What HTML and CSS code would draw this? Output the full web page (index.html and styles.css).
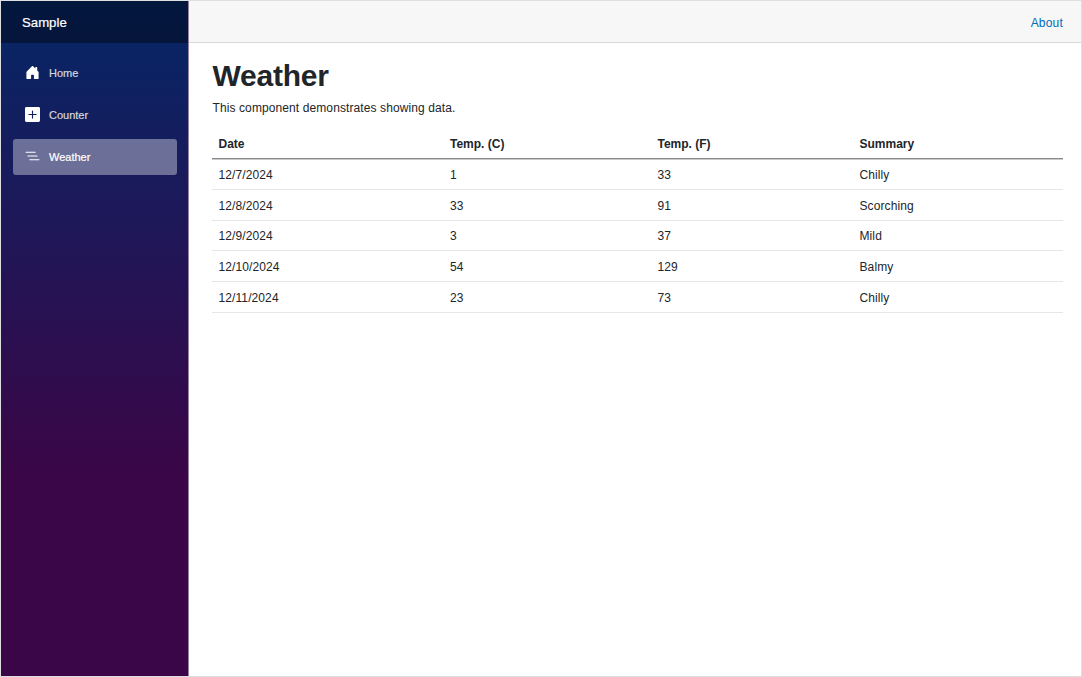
FILE: index.html
```html
<!DOCTYPE html>
<html lang="en">
<head>
<meta charset="utf-8">
<title>Weather</title>
<link rel="stylesheet" href="styles.css">
</head>
<body>
<div class="page">
  <aside class="sidebar">
    <div class="brand"><span class="brand-text">Sample</span></div>
    <nav class="nav">
      <a class="nav-link">
        <svg class="icon" viewBox="0 0 16 16"><path d="M6.5 14.5v-3.505c0-.245.25-.495.5-.495h2c.25 0 .5.25.5.5v3.5a.5.5 0 0 0 .5.5h4a.5.5 0 0 0 .5-.5v-7a.5.5 0 0 0-.146-.354L13 5.793V2.5a.5.5 0 0 0-.5-.5h-1a.5.5 0 0 0-.5.5v1.293L8.354 1.146a.5.5 0 0 0-.708 0l-6 6A.5.5 0 0 0 1.5 7.5v7a.5.5 0 0 0 .5.5h4a.5.5 0 0 0 .5-.5Z"/></svg>
        <span class="nav-text">Home</span>
      </a>
      <a class="nav-link">
        <svg class="icon" viewBox="0 0 16 16"><path d="M1.500 0A1.500 1.500 0 0 0 0 1.500v13A1.500 1.500 0 0 0 1.500 16h13a1.500 1.500 0 0 0 1.500-1.500v-13A1.500 1.500 0 0 0 14.500 0zM8.600 4.200v3.200h3.200a.6.6 0 0 1 0 1.200H8.600v3.200a.6.6 0 0 1-1.200 0V8.600H4.200a.6.6 0 0 1 0-1.200h3.200V4.200a.6.6 0 0 1 1.200 0z"/></svg>
        <span class="nav-text">Counter</span>
      </a>
      <a class="nav-link active">
        <svg class="icon" viewBox="0 0 16 16"><path fill-rule="evenodd" d="M4.5 11.5A.5.5 0 0 1 5 11h10a.5.5 0 0 1 0 1H5a.5.5 0 0 1-.5-.5zm-2-4A.5.5 0 0 1 3 7h10a.5.5 0 0 1 0 1H3a.5.5 0 0 1-.5-.5zm-2-4A.5.5 0 0 1 1 3h10a.5.5 0 0 1 0 1H1a.5.5 0 0 1-.5-.5z"/></svg>
        <span class="nav-text">Weather</span>
      </a>
    </nav>
  </aside>
  <main class="main">
    <div class="top-row"><a class="about">About</a></div>
    <article class="content">
      <h1 class="title">Weather</h1>
      <p class="intro">This component demonstrates showing data.</p>
      <table class="table">
        <colgroup><col class="col-date"><col class="col-c"><col class="col-f"><col></colgroup>
        <thead><tr><th>Date</th><th>Temp. (C)</th><th>Temp. (F)</th><th>Summary</th></tr></thead>
        <tbody>
          <tr><td>12/7/2024</td><td>1</td><td>33</td><td>Chilly</td></tr>
          <tr><td>12/8/2024</td><td>33</td><td>91</td><td>Scorching</td></tr>
          <tr class="short"><td>12/9/2024</td><td>3</td><td>37</td><td>Mild</td></tr>
          <tr><td>12/10/2024</td><td>54</td><td>129</td><td>Balmy</td></tr>
          <tr><td>12/11/2024</td><td>23</td><td>73</td><td>Chilly</td></tr>
        </tbody>
      </table>
    </article>
  </main>
</div>
</body>
</html>
```
FILE: styles.css
```css
* { box-sizing: border-box; }

body {
  margin: 0;
  font: 12px/18px "Liberation Sans", Arial, sans-serif;
  color: #212529;
  background: #fff;
}

.page {
  display: flex;
  height: 677px;
  border: 1px solid #dedfe0;
}

.sidebar {
  width: 188px;
  border-right: 1px solid #9583a0;
  background: linear-gradient(180deg, #052767 0%, #3a0647 70%);
}

.brand {
  display: flex;
  align-items: center;
  height: 42px;
  padding: 2px 0 0 21px;
  background: rgba(0, 0, 0, 0.4);
  color: #fff;
  font-size: 13.2px;
  -webkit-text-stroke: 0.2px #fff;
}

.nav {
  display: flex;
  flex-direction: column;
  gap: 6px;
  padding: 12px 11.5px 0 12px;
}

.nav-link {
  display: flex;
  align-items: center;
  gap: 9px;
  height: 36px;
  padding-left: 12px;
  border-radius: 3px;
  color: #d7d7d7;
  font-size: 11px;
  -webkit-text-stroke: 0.2px currentColor;
}

.active {
  background: rgba(255, 255, 255, 0.37);
  color: #fff;
}

.icon {
  width: 15px;
  height: 15px;
  margin-top: -1px;
  fill: #fff;
}

.main { flex: 1; }

.top-row {
  display: flex;
  align-items: center;
  justify-content: flex-end;
  height: 42px;
  padding-right: 18px;
  border-bottom: 1px solid #d9d9dc;
  background: #f7f7f7;
}

.about {
  margin-top: 2px;
  color: #006bb7;
  letter-spacing: 0.2px;
}

.content { padding: 15px 18px 0 23.5px; }

.title {
  margin: 0 0 5px;
  font-size: 30px;
  line-height: 36px;
  font-weight: 700;
  letter-spacing: -0.25px;
}

.intro {
  margin: 0 0 12px;
  letter-spacing: 0.1px;
}

.table {
  width: 851px;
  margin-left: -0.5px;
  table-layout: fixed;
  border-collapse: separate;
  border-spacing: 0;
}

.col-date { width: 231.5px; }
.col-c { width: 207.5px; }
.col-f { width: 202px; }

.table th,
.table td {
  height: 31px;
  padding: 2px 6.5px 0;
  text-align: left;
  border-bottom: 1px solid #e4e6e8;
}

.table td { letter-spacing: 0.1px; }

.table th {
  height: 30px;
  padding-top: 0;
  border-bottom-color: #868889;
}

.table tbody tr:first-child td { box-shadow: inset 0 1px #c9cacb; }

.table .short td {
  height: 30px;
  padding-top: 0;
}
```
